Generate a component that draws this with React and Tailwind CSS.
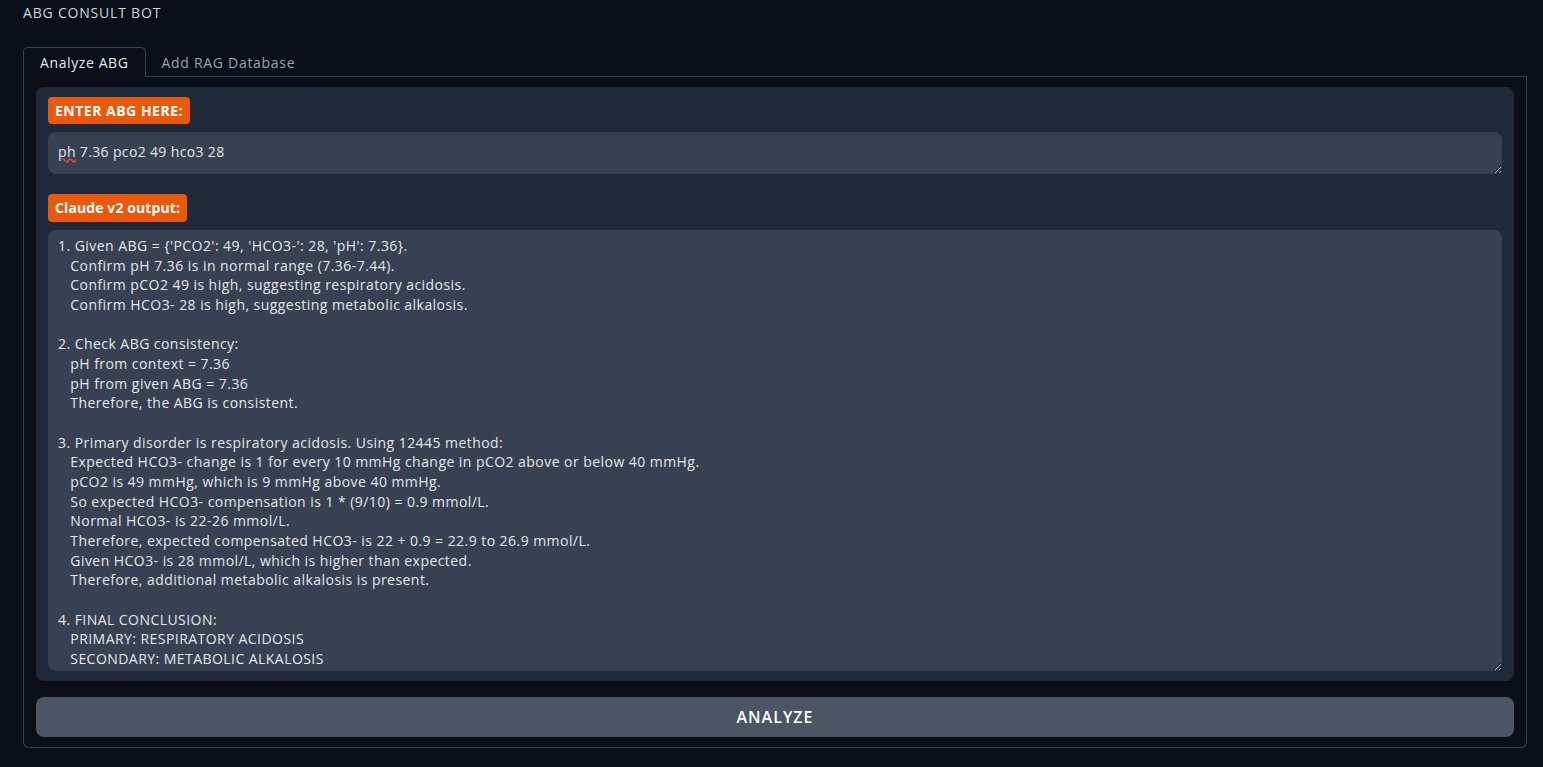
import React from "react";

const OUTPUT = `1. Given ABG = {'PCO2': 49, 'HCO3-': 28, 'pH': 7.36}.
   Confirm pH 7.36 is in normal range (7.36-7.44).
   Confirm pCO2 49 is high, suggesting respiratory acidosis.
   Confirm HCO3- 28 is high, suggesting metabolic alkalosis.

2. Check ABG consistency:
   pH from context = 7.36
   pH from given ABG = 7.36
   Therefore, the ABG is consistent.

3. Primary disorder is respiratory acidosis. Using 12445 method:
   Expected HCO3- change is 1 for every 10 mmHg change in pCO2 above or below 40 mmHg.
   pCO2 is 49 mmHg, which is 9 mmHg above 40 mmHg.
   So expected HCO3- compensation is 1 * (9/10) = 0.9 mmol/L.
   Normal HCO3- is 22-26 mmol/L.
   Therefore, expected compensated HCO3- is 22 + 0.9 = 22.9 to 26.9 mmol/L.
   Given HCO3- is 28 mmol/L, which is higher than expected.
   Therefore, additional metabolic alkalosis is present.

4. FINAL CONCLUSION:
   PRIMARY: RESPIRATORY ACIDOSIS
   SECONDARY: METABOLIC ALKALOSIS`;

const font = { fontFamily: "'Open Sans', 'Liberation Sans', sans-serif" };

export default function App() {
  return (
    <div
      className="min-h-[767px] w-full bg-[#0b0f19] pl-[23px] pr-[16px] pt-[4px] text-[#e5e7eb]"
      style={font}
    >
      <div className="h-[18px] text-[14px] leading-[18px] tracking-[0.8px] text-[#d1d5db]">ABG CONSULT BOT</div>
      <div className="mt-[25px] flex h-[30px] items-end">
        <div className="flex h-[30px] items-center rounded-t-[5px] border border-b-0 border-[#374151] px-4 text-[14px] tracking-[0.6px] text-[#e5e7eb]">
          Analyze ABG
        </div>
        <div className="flex h-[29px] flex-1 items-center border-b border-[#374151] px-4 text-[14px] tracking-[0.7px] text-[#9ca3af]">
          Add RAG Database
        </div>
      </div>
      <div className="h-[671px] rounded-b-[6px] border border-t-0 border-[#374151] px-[12px] pt-[10px]">
        <div className="flex flex-col rounded-[8px] bg-[#1f2937] px-[12px] pb-[10px] pt-[10px]">
          <div className="self-start rounded-[4px] bg-[#ea580c] px-[7px] py-[4px] text-[14px] font-bold leading-[19px] tracking-[0.5px] text-white">
            ENTER ABG HERE:
          </div>
          <div className="relative mt-[8px]">
            <textarea
              spellCheck={false}
              defaultValue="ph 7.36 pco2 49 hco3 28"
              className="block h-[42px] w-full resize-y rounded-[8px] bg-[#374151] px-[10px] py-[10px] text-[14px] leading-[20px] tracking-[0.35px] text-[#e5e7eb] outline-none"
              style={font}
            />
            <span
              className="pointer-events-none absolute left-[10px] top-[10px] text-[14px] leading-[20px] tracking-[0.35px] text-transparent underline decoration-[#ef4444] decoration-wavy"
              style={font}
            >
              ph
            </span>
          </div>
          <div className="mt-[20px] self-start rounded-[4px] bg-[#ea580c] px-[7px] py-[4px] text-[14px] font-bold leading-[20px] tracking-[0.1px] text-white">
            Claude v2 output:
          </div>
          <textarea
            readOnly
            spellCheck={false}
            defaultValue={OUTPUT}
            className="mt-[8px] block h-[441px] w-full resize-y overflow-hidden rounded-[8px] bg-[#374151] px-[10px] pt-[6px] text-[14px] leading-[19.67px] tracking-[0.45px] text-[#e5e7eb] outline-none"
            style={font}
          />
        </div>
        <button className="mt-[16px] flex h-[40px] w-full items-center justify-center rounded-[8px] bg-[#4b5563] text-[16px] font-semibold tracking-[1px] text-white">
          ANALYZE
        </button>
      </div>
    </div>
  );
}
